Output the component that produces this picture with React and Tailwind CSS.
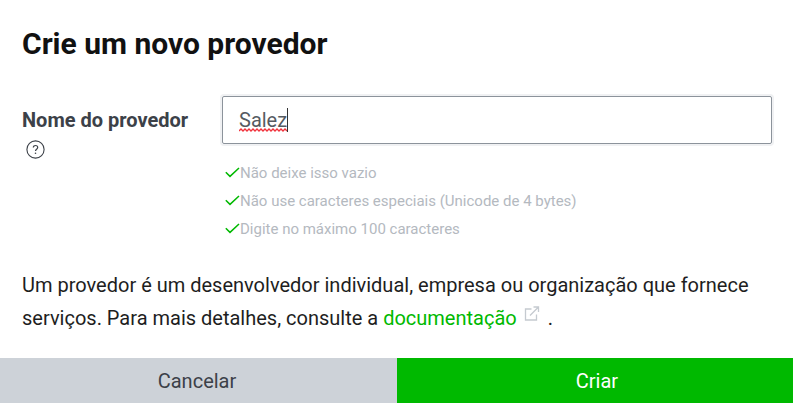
import React from 'react';

const hints = [
    'Não deixe isso vazio',
    'Não use caracteres especiais (Unicode de 4 bytes)',
    'Digite no máximo 100 caracteres',
];

function Check() {
    return (
        <svg width="15" height="11" viewBox="0 0 15 11" fill="none" className="shrink-0 relative top-[-1px]">
            <path d="M0.8 5.2L5 9.4L14 1" stroke="#00b900" strokeWidth="1.5" />
        </svg>
    );
}

function HelpIcon() {
    return (
        <svg width="19" height="19" viewBox="0 0 19 19" fill="none">
            <circle cx="9.5" cy="9.5" r="8.6" stroke="#3c4148" strokeWidth="1.1" />
            <path d="M7.3 7.6c0-1.3 1-2.1 2.2-2.1s2.2.8 2.2 2c0 1.7-2.2 1.7-2.2 3.5" stroke="#3c4148" strokeWidth="1.2" />
            <circle cx="9.5" cy="13.3" r="0.8" fill="#3c4148" />
        </svg>
    );
}

function ExternalIcon() {
    return (
        <svg width="16" height="16" viewBox="0 0 16 16" fill="none" className="inline-block">
            <path d="M7.5 3H1.5V14H12.5V8.5" stroke="#c5cad0" strokeWidth="1.3" />
            <path d="M6 9.5L14 1.5M9.5 1H14.5V6" stroke="#c5cad0" strokeWidth="1.3" />
        </svg>
    );
}

function Squiggle() {
    return (
        <svg width="48" height="4" viewBox="0 0 48 4" fill="none" className="absolute left-[16px] top-[31px]">
            <path d="M0 3L2 1L4 3L6 1L8 3L10 1L12 3L14 1L16 3L18 1L20 3L22 1L24 3L26 1L28 3L30 1L32 3L34 1L36 3L38 1L40 3L42 1L44 3L46 1L48 3" stroke="#f0323c" strokeWidth="1.3" />
        </svg>
    );
}

export default function App() {
    return (
        <div className="w-[793px] h-[403px] bg-white flex flex-col overflow-hidden font-['Roboto',sans-serif]">
            <div className="flex-1 px-[22px] pt-[25px]">
                <h1 className="text-[30px] leading-[38px] font-bold text-[#111]">Crie um novo provedor</h1>

                <div className="flex mt-[33px]">
                    <div className="w-[200px] shrink-0">
                        <div className="text-[20px] leading-[26px] font-bold text-[#3c4148] pt-[11px]">Nome do provedor</div>
                        <div className="mt-[7px] ml-[4px] flex"><HelpIcon /></div>
                    </div>
                    <div className="w-[550px] shrink-0">
                        <div className="relative h-[48px] border border-[#8c939b] rounded-[2px] shadow-[0_0_0_2px_#f0f1f3] flex items-center pl-[16px] text-[20px] text-[#555b62]">
                            <span>Salez</span>
                            <span className="w-px h-[24px] bg-[#333]" />
                            <Squiggle />
                        </div>
                        <ul className="mt-[15px] ml-[3px]">
                            {hints.map(h => (
                                <li key={h} className="flex items-center h-[28px] text-[15px] text-[#b4b9bf]">
                                    <Check />
                                    <span>{h}</span>
                                </li>
                            ))}
                        </ul>
                    </div>
                </div>

                <p className="mt-[26px] text-[20px] leading-[33px] text-[#1e1e1e] whitespace-nowrap">
                    Um provedor é um desenvolvedor individual, empresa ou organização que fornece<br />
                    serviços. Para mais detalhes, consulte a <span className="text-[#00b900]">documentação</span>
                    <span className="ml-[7px] mr-[8px] relative top-[-7px] inline-block align-middle"><ExternalIcon /></span>.
                </p>
            </div>

            <div className="flex h-[45px] shrink-0">
                <button className="w-[397px] bg-[#cdd2d8] pr-[3px] text-[20px] text-[#3c4148]">Cancelar</button>
                <button className="flex-1 bg-[#00b900] pl-[4px] text-[20px] text-white">Criar</button>
            </div>
        </div>
    );
}
